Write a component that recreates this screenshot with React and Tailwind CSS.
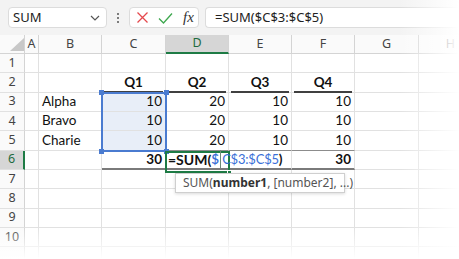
import React from "react";

const cols = [
  { key: "A", w: "w-[14px]" },
  { key: "B", w: "w-[63px]" },
  { key: "C", w: "w-[64px]" },
  { key: "D", w: "w-[63px]" },
  { key: "E", w: "w-[63px]" },
  { key: "F", w: "w-[63px]" },
  { key: "G", w: "w-[64px]" },
  { key: "H", w: "w-[64px]" },
];

const data = {
  2: { C: "Q1", D: "Q2", E: "Q3", F: "Q4" },
  3: { B: "Alpha", C: "10", D: "20", E: "10", F: "10" },
  4: { B: "Bravo", C: "10", D: "20", E: "10", F: "10" },
  5: { B: "Charie", C: "10", D: "20", E: "10", F: "10" },
  6: { C: "30", F: "30" },
};

const rows = [1, 2, 3, 4, 5, 6, 7, 8, 9, 10, 11];
const totalCols = ["C", "D", "E", "F"];

function Cell({ row, col }) {
  const value = data[row] && data[row][col.key];
  const isHead = row === 2 && value;
  const isNum = value && /^\d+$/.test(value);
  const inTotal = totalCols.includes(col.key);

  let border = "border-b border-[#e1e1e1]";
  if (row === 5 && inTotal) border = "border-b border-[#8c8c8c]";
  if (row === 6 && inTotal) border = "border-b-2 border-[#7a7a7a]";

  return (
    <div
      className={`relative h-full shrink-0 border-r border-r-[#e1e1e1] ${border} ${col.w} ${
        row >= 3 && row <= 5 && col.key === "C" ? "bg-[#e8eef8]" : ""
      } flex items-center px-[3px] ${isHead ? "justify-center font-bold" : isNum ? "justify-end" : "justify-start"} ${
        row === 6 && isNum ? "font-bold" : ""
      }`}
    >
      {value && <span className="leading-none">{value}</span>}
      {isHead && <div className="absolute bottom-[-1px] left-[2px] right-[2px] h-[2px] bg-[#404040]" />}
      {row === 6 && col.key === "D" && (
        <div className="absolute left-[2px] top-0 h-full flex items-center whitespace-nowrap z-10">
          <span className="font-bold text-[14px]">=SUM(</span>
          <span className="text-[#3a6fd8] font-semibold text-[13.5px]">$</span>
          <span className="inline-block w-px h-[18px] bg-[#6f8a78] mx-[1px]" />
          <span className="text-[#3a6fd8] text-[13px] tracking-[-0.2px]">C$3:$C$5</span>
          <span className="font-bold text-[13.5px]">)</span>
        </div>
      )}
    </div>
  );
}

export default function App() {
  return (
    <div className="relative w-[459px] h-[259px] overflow-hidden bg-white text-[#1f1f1f]">
      {/* formula bar */}
      <div className="h-[35px] bg-[#f3f3f3] flex items-center font-['Noto_Sans',sans-serif] text-[13px]">
        <div className="ml-[8px] w-[99px] h-[21px] rounded-[4px] border border-[#dcdcdc] bg-white flex items-center justify-between pl-[4px] pr-[6px]">
          <span className="text-[#222]">SUM</span>
          <svg width="10" height="6" viewBox="0 0 10 6">
            <path d="M1 1l4 4 4-4" fill="none" stroke="#555" strokeWidth="1.2" />
          </svg>
        </div>
        <div className="w-[22px] flex flex-col items-center gap-[2px]">
          <span className="w-[2px] h-[2px] bg-[#555] rounded-full" />
          <span className="w-[2px] h-[2px] bg-[#555] rounded-full" />
          <span className="w-[2px] h-[2px] bg-[#555] rounded-full" />
        </div>
        <div className="w-[70px] h-[21px] rounded-[4px] border border-[#dcdcdc] bg-white flex items-center pl-[6px] gap-[9px]">
          <svg width="13" height="13" viewBox="0 0 13 13">
            <path d="M1.5 1.5l10 10M11.5 1.5l-10 10" stroke="#e5484d" strokeWidth="1.3" />
          </svg>
          <svg width="15" height="12" viewBox="0 0 15 12">
            <path d="M1 6.5l4.5 4.5L14 1.5" fill="none" stroke="#3ea84f" strokeWidth="1.3" />
          </svg>
          <span className="font-['Liberation_Serif',serif] italic text-[15px] leading-none text-[#333] ml-[1px]">
            fx
          </span>
        </div>
        <div className="ml-[6px] flex-1 h-[21px] rounded-l-[4px] border border-r-0 border-[#dcdcdc] bg-white flex items-center pl-[9px]">
          <span className="text-[#222]">=SUM($C$3:$C$5)</span>
        </div>
      </div>

      {/* grid */}
      <div className="font-['Lato',sans-serif] text-[13.5px] text-[#111]">
        <div className="flex h-[19px] bg-[#fafafa] font-['Noto_Sans',sans-serif] text-[12.5px] text-[#444]">
          <div className="w-[25px] shrink-0 border-r border-b border-[#d4d4d4] relative">
            <svg className="absolute left-[10px] top-[3px]" width="14" height="13" viewBox="0 0 14 13">
              <path d="M0 13L14 0V13Z" fill="#c8c8c8" />
            </svg>
          </div>
          {cols.map((c) => (
            <div
              key={c.key}
              className={`${c.w} shrink-0 flex items-center justify-center border-r border-[#d4d4d4] ${
                c.key === "D" ? "bg-[#d6d6d6] text-[#1e6b3f] border-b-2 border-b-[#1e7b45]" : "border-b"
              }`}
            >
              {c.key}
            </div>
          ))}
        </div>
        {rows.map((r) => (
          <div key={r} className="flex h-[19.33px]">
            <div
              className={`w-[25px] shrink-0 flex items-center justify-center border-b border-[#e1e1e1] font-['Noto_Sans',sans-serif] text-[12.5px] ${
                r === 6
                  ? "bg-[#d6d6d6] text-[#1e6b3f] border-r-2 border-r-[#1e7b45]"
                  : "text-[#444] border-r border-r-[#d4d4d4] bg-[#fafafa]"
              }`}
            >
              {r < 11 ? r : ""}
            </div>
            {cols.map((c) => (
              <Cell key={c.key} row={r} col={c} />
            ))}
          </div>
        ))}
      </div>

      {/* selection C3:C5 */}
      <div className="absolute left-[101px] top-[92px] w-[66px] h-[60px] border-2 border-[#4a7bd0] pointer-events-none">
        <span className="absolute -left-[4px] -top-[4px] w-[5px] h-[5px] bg-[#4a7bd0]" />
        <span className="absolute -right-[4px] -top-[4px] w-[5px] h-[5px] bg-[#4a7bd0]" />
        <span className="absolute -left-[4px] -bottom-[4px] w-[5px] h-[5px] bg-[#4a7bd0]" />
        <span className="absolute -right-[4px] -bottom-[4px] w-[5px] h-[5px] bg-[#4a7bd0]" />
      </div>

      {/* active cell D6 */}
      <div className="absolute left-[165px] top-[151px] w-[65px] h-[22px] border-2 border-[#1e7b45] pointer-events-none">
        <span className="absolute -right-[4px] -bottom-[4px] w-[5px] h-[5px] bg-[#1e7b45] border border-white" />
      </div>

      {/* function tooltip */}
      <div className="absolute left-[175px] top-[173px] w-[170px] h-[20px] bg-white border border-[#cfcfcf] shadow-[0_1px_3px_rgba(0,0,0,0.15)] flex items-center pl-[7px] font-['Noto_Sans',sans-serif] text-[12px] text-[#555] whitespace-nowrap">
        SUM(<b className="text-[#333]">number1</b>, [number2], ...)
      </div>

      {/* edge fades */}
      <div className="absolute top-0 right-0 w-[60px] h-full bg-linear-to-r from-white/0 to-white pointer-events-none" />
      <div className="absolute bottom-0 left-0 w-full h-[32px] bg-linear-to-b from-white/0 to-white pointer-events-none" />
    </div>
  );
}
